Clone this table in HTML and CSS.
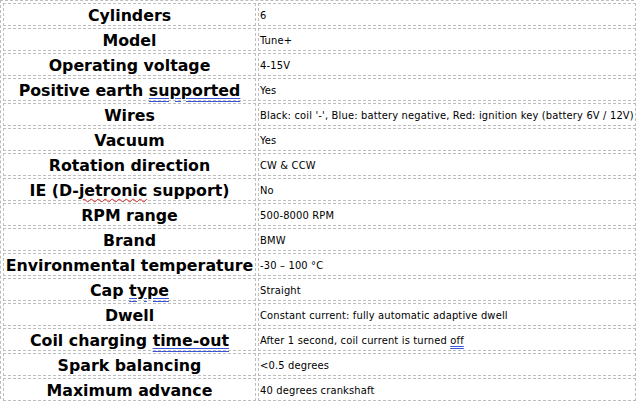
FILE: index.html
```html
<!DOCTYPE html>
<html>
<head>
<meta charset="utf-8">
<link rel="stylesheet" href="styles.css">
</head>
<body>
<table class="specs">
  <colgroup><col class="c-label"><col class="c-value"></colgroup>
  <tr><th>Cylinders</th><td>6</td></tr>
  <tr><th>Model</th><td>Tune+</td></tr>
  <tr><th>Operating voltage</th><td>4-15V</td></tr>
  <tr><th>Positive earth <span class="gram">supported</span></th><td>Yes</td></tr>
  <tr><th>Wires</th><td>Black: coil '-', Blue: battery negative, Red: ignition key (battery 6V / 12V)</td></tr>
  <tr><th>Vacuum</th><td>Yes</td></tr>
  <tr><th>Rotation direction</th><td>CW &amp; CCW</td></tr>
  <tr><th>IE (D-<span class="spell">jetronic</span> support)</th><td>No</td></tr>
  <tr><th>RPM range</th><td>500-8000 RPM</td></tr>
  <tr><th>Brand</th><td>BMW</td></tr>
  <tr><th>Environmental temperature</th><td>-30 – 100 °C</td></tr>
  <tr><th>Cap <span class="gram">type</span></th><td>Straight</td></tr>
  <tr><th>Dwell</th><td>Constant current: fully automatic adaptive dwell</td></tr>
  <tr><th>Coil charging <span class="gram">time-out</span></th><td>After 1 second, coil current is turned <span class="gram">off</span></td></tr>
  <tr><th>Spark balancing</th><td>&lt;0.5 degrees</td></tr>
  <tr><th>Maximum advance</th><td>40 degrees crankshaft</td></tr>
</table>
</body>
</html>
```

FILE: styles.css
```css
html, body {
  margin: 0;
  padding: 0;
  background: #fff;
  overflow: hidden;
}

.specs {
  border: 1px dashed #bdbdbd;
  border-spacing: 2px;
  table-layout: fixed;
  width: 639px;
}

.c-label { width: 253px; }
.c-value { width: 378px; }

.specs th,
.specs td {
  border: 1px dashed #bdbdbd;
  padding: 2px 1px 0;
  height: 19px;
  vertical-align: middle;
  white-space: nowrap;
  color: #000;
}

.specs th {
  font-family: "DejaVu Sans", Verdana, sans-serif;
  font-weight: bold;
  font-size: 15.8px;
  text-align: center;
  line-height: 19px;
}

.specs td {
  font-family: "DejaVu Sans Condensed", "DejaVu Sans", Tahoma, sans-serif;
  font-size: 11px;
  letter-spacing: 0.17px;
  text-align: left;
  line-height: 14px;
}

.gram {
  text-decoration: underline double #3a56d6;
  text-underline-offset: 2px;
}

.spell {
  text-decoration: underline wavy #e02020;
  text-decoration-thickness: 1px;
  text-underline-offset: 2px;
}
```
